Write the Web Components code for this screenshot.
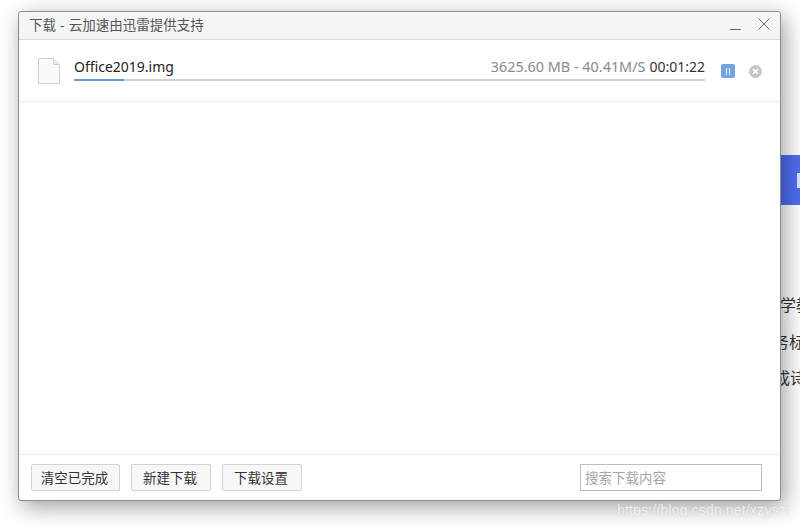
<!DOCTYPE html>
<html lang="zh">
<head>
<meta charset="utf-8">
<title>下载</title>
<style>
  html, body { margin: 0; height: 100%; background: #fff; overflow: hidden; }
  body { font-family: "Noto Sans CJK SC", "Noto Sans", sans-serif; color: #333; }
</style>
</head>
<body>
<page-behind></page-behind>
<download-window>
  <window-titlebar slot="title">下载 - 云加速由迅雷提供支持</window-titlebar>
  <download-item name="Office2019.img" stats="3625.60 MB - 40.41M/S" time="00:01:22" progress="8"></download-item>
  <window-footer slot="footer">
    <flat-button style="width:89px">清空已完成</flat-button>
    <flat-button style="width:80px">新建下载</flat-button>
    <flat-button style="width:80px">下载设置</flat-button>
    <search-box placeholder="搜索下载内容"></search-box>
  </window-footer>
</download-window>
<water-mark>https://blog.csdn.net/xzyszt</water-mark>

<script>
class PageBehind extends HTMLElement {
  constructor() {
    super();
    this.attachShadow({ mode: 'open' });
    this.shadowRoot.innerHTML = `
      <style>
        :host { position: absolute; left: 781px; top: 0; width: 19px; height: 527px; overflow: hidden; display: block; }
        .blue { position: absolute; top: 155px; left: 0; width: 19px; height: 50px; background: #4e6ef2; }
        .blue i { position: absolute; left: 16px; top: 18px; width: 3px; height: 15px; background: #dfe5fd; }
        .line { position: absolute; white-space: nowrap; font-size: 16px; line-height: 20px; color: #333; }
      </style>
      <div class="blue"><i></i></div>
      <div class="line" style="top:294px;left:-1px">学教</div>
      <div class="line" style="top:331px;left:-8px">务标</div>
      <div class="line" style="top:367px;left:-7px">成诗</div>
    `;
  }
}

class DownloadWindow extends HTMLElement {
  constructor() {
    super();
    this.attachShadow({ mode: 'open' });
    this.shadowRoot.innerHTML = `
      <style>
        :host {
          position: absolute; left: 18px; top: 11px; width: 761px; height: 488px;
          display: flex; flex-direction: column;
          background: #fff; border: 1px solid #8c8c8c; border-radius: 3px;
          box-shadow: 4px 6px 22px rgba(0,0,0,0.38);
        }
        .body { flex: 1; min-height: 0; }
      </style>
      <slot name="title"></slot>
      <div class="body"><slot></slot></div>
      <slot name="footer"></slot>
    `;
  }
}

class WindowTitlebar extends HTMLElement {
  constructor() {
    super();
    this.attachShadow({ mode: 'open' });
    this.shadowRoot.innerHTML = `
      <style>
        :host {
          display: flex; align-items: center; justify-content: space-between;
          height: 27px; padding: 0 10px 0 10px;
          background: #f5f5f5; border-bottom: 1px solid #d9d9d9;
          border-radius: 3px 3px 0 0;
          font-size: 13.5px; color: #555;
        }
        .label { word-spacing: 1px; padding-bottom: 3px; }
        .btns { display: flex; align-items: center; gap: 17px; margin-top: -3px; }
        svg { display: block; }
      </style>
      <span class="label"><slot></slot></span>
      <div class="btns">
        <svg width="11" height="12" viewBox="0 0 11 12"><path d="M0 11.5H11" stroke="#666" stroke-width="1"/></svg>
        <svg width="12" height="12" viewBox="0 0 12 12"><path d="M.5.5L11.5 11.5M11.5.5L.5 11.5" stroke="#666" stroke-width="1"/></svg>
      </div>
    `;
  }
}

class DownloadItem extends HTMLElement {
  constructor() {
    super();
    this.attachShadow({ mode: 'open' });
  }

  connectedCallback() {
    const name = this.getAttribute('name');
    const stats = this.getAttribute('stats');
    const time = this.getAttribute('time');
    const progress = this.getAttribute('progress');
    this.shadowRoot.innerHTML = `
      <style>
        :host {
          display: flex; align-items: center; height: 61px;
          padding: 0 18px 0 19px;
          border-bottom: 1px solid #ececec;
          font-family: "Noto Sans", "Noto Sans CJK SC", sans-serif;
        }
        .file { width: 22px; height: 26px; margin-right: 14px; flex: none; display: block; }
        .main { flex: 1; min-width: 0; padding-bottom: 7px; }
        .row { display: flex; align-items: baseline; justify-content: space-between; box-sizing: border-box; height: 26px; padding-top: 1px; line-height: 25px; }
        .name { font-size: 14px; color: #222; }
        .stats { font-size: 14.4px; color: #8a8a8a; }
        .time { font-size: 14px; color: #333; margin-left: 4px; }
        .bar { height: 2px; background: #d2d2d2; }
        .fill { height: 2px; background: #5d9bd5; }
        .pause {
          width: 14px; height: 14px; margin: 1px 0 0 16px; flex: none; border-radius: 2px;
          background: #72a5e0; display: flex; align-items: center; justify-content: center; gap: 2px;
        }
        .pause i { width: 1px; height: 7px; background: #e4eefa; }
        .cancel { width: 13px; height: 13px; margin: 1px 0 0 14px; flex: none; display: block; }
      </style>
      <svg class="file" viewBox="0 0 22 26">
        <path d="M.5.5H15.5L21.5 6.5V25.5H.5Z" fill="#fafafa" stroke="#cfcfcf"/>
        <path d="M15.5.5V6.5H21.5" fill="#eee" stroke="#cfcfcf"/>
      </svg>
      <div class="main">
        <div class="row">
          <span class="name">${name}</span>
          <span class="stats">${stats}<span class="time">${time}</span></span>
        </div>
        <div class="bar"><div class="fill" style="width:${progress}%"></div></div>
      </div>
      <div class="pause"><i></i><i></i></div>
      <svg class="cancel" viewBox="0 0 13 13">
        <circle cx="6.5" cy="6.5" r="6.5" fill="#c6c6c6"/>
        <path d="M4 4L9 9M9 4L4 9" stroke="#fff" stroke-width="1.6"/>
      </svg>
    `;
  }
}

class WindowFooter extends HTMLElement {
  constructor() {
    super();
    this.attachShadow({ mode: 'open' });
    this.shadowRoot.innerHTML = `
      <style>
        :host {
          display: flex; align-items: center; gap: 11px; height: 45px;
          padding: 0 18px 0 12px; border-top: 1px solid #ececec;
        }
        ::slotted(search-box) { margin-left: auto; }
      </style>
      <slot></slot>
    `;
  }
}

class FlatButton extends HTMLElement {
  constructor() {
    super();
    this.attachShadow({ mode: 'open' });
    this.shadowRoot.innerHTML = `
      <style>
        :host {
          display: flex; align-items: center; justify-content: center; box-sizing: border-box;
          height: 27px; padding: 0 2px 2px 0;
          background: #f7f7f7; border: 1px solid #d2d2d2; border-radius: 2px;
          font-size: 13.5px; color: #333;
        }
      </style>
      <slot></slot>
    `;
  }
}

class SearchBox extends HTMLElement {
  constructor() {
    super();
    this.attachShadow({ mode: 'open' });
  }

  connectedCallback() {
    this.shadowRoot.innerHTML = `
      <style>
        :host {
          display: flex; align-items: center; box-sizing: border-box;
          width: 182px; height: 27px; padding: 0 0 2px 4px;
          background: #fff; border: 1px solid #bdbdbd;
          font-size: 13.5px; color: #a5a5a5;
        }
      </style>
      <span>${this.getAttribute('placeholder')}</span>
    `;
  }
}

class WaterMark extends HTMLElement {
  constructor() {
    super();
    this.attachShadow({ mode: 'open' });
    this.shadowRoot.innerHTML = `
      <style>
        :host {
          position: absolute; left: 617px; top: 501px; display: block; white-space: nowrap;
          font-family: "Liberation Sans", sans-serif; font-size: 14.4px; line-height: 18px;
          color: rgba(255,255,255,0.85); text-shadow: 0 0 1px rgba(150,150,150,0.6);
        }
      </style>
      <slot></slot>
    `;
  }
}

customElements.define('page-behind', PageBehind);
customElements.define('download-window', DownloadWindow);
customElements.define('window-titlebar', WindowTitlebar);
customElements.define('download-item', DownloadItem);
customElements.define('window-footer', WindowFooter);
customElements.define('flat-button', FlatButton);
customElements.define('search-box', SearchBox);
customElements.define('water-mark', WaterMark);
</script>
</body>
</html>
